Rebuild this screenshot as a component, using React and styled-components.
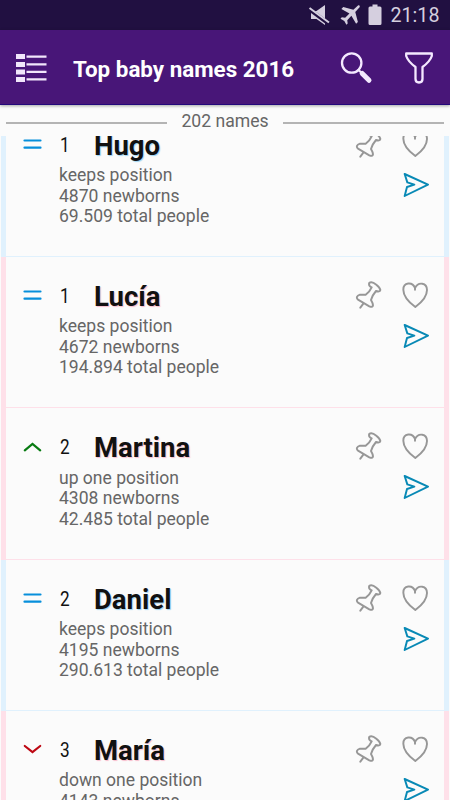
import React from "react";
import styled, { createGlobalStyle } from "styled-components";

const names = [
  {
    name: "Hugo",
    rank: 1,
    trend: "same",
    gender: "boy",
    lines: ["keeps position", "4870 newborns", "69.509 total people"],
  },
  {
    name: "Lucía",
    rank: 1,
    trend: "same",
    gender: "girl",
    lines: ["keeps position", "4672 newborns", "194.894 total people"],
  },
  {
    name: "Martina",
    rank: 2,
    trend: "up",
    gender: "girl",
    lines: ["up one position", "4308 newborns", "42.485 total people"],
  },
  {
    name: "Daniel",
    rank: 2,
    trend: "same",
    gender: "boy",
    lines: ["keeps position", "4195 newborns", "290.613 total people"],
  },
  {
    name: "María",
    rank: 3,
    trend: "down",
    gender: "girl",
    lines: ["down one position", "4143 newborns"],
  },
];

const trends = {
  same: { color: "#078fdb", d: "M1.5 5.5H17.5M1.5 12.7H17.5" },
  up: { color: "#087b12", d: "M1.8 12.4 9.5 6 17.2 12.4" },
  down: { color: "#bd0712", d: "M1.8 6 9.5 12 17.2 6" },
};

const TrendIcon = ({ trend }) => (
  <TrendSvg viewBox="0 0 18 18" $color={trends[trend].color}>
    <path d={trends[trend].d} />
  </TrendSvg>
);

const PinIcon = () => (
  <ActionSvg viewBox="45 93 84 84" $color="#979797">
    <path d="M94 97Q87 97 87 102Q87 109 95 112Q90 124 77 134H60Q45 139 54 149L88 169Q98 173 99 166Q99 160 93 150Q96 137 108 123Q119 127 121 120Q120 113 109 104Q100 97 94 97ZM70 161 61 173" />
  </ActionSvg>
);

const HeartIcon = () => (
  <ActionSvg viewBox="183 93 84 84" $color="#979797">
    <path d="M226 171C210 159 190 141 190 119C190 97 217 94 225 114C235 94 261 98 261 120C261 142 241 160 226 171Z" />
    <path d="M225 112V119" />
  </ActionSvg>
);

const SendIcon = () => (
  <ActionSvg viewBox="183 216 84 84" $color="#0889b5">
    <path d="M194 225 264 257 194 291 201 264 223 257 202 250Z" />
  </ActionSvg>
);

const NameRow = ({ item }) => (
  <Row $gender={item.gender}>
    <TrendIcon trend={item.trend} />
    <Details>
      <Heading>
        <Rank>{item.rank}</Rank>
        <Name $gender={item.gender}>{item.name}</Name>
      </Heading>
      {item.lines.map((line) => (
        <Line key={line}>{line}</Line>
      ))}
    </Details>
    <Actions>
      <PinIcon />
      <HeartIcon />
      <SendCell>
        <SendIcon />
      </SendCell>
    </Actions>
  </Row>
);

const App = () => {
  return (
    <>
      <GlobalStyle />
      <Screen>
        <StatusBar>
          <StatusSvg viewBox="0 0 22 22" $width={22}>
            <path d="M3 7h5.5L17 1v20L8.500 15H3z" fill="#d5cfdf" />
            <path d="M1 5 21 20" stroke="#211041" strokeWidth="4" />
            <path d="M1.500 4 21 18.500" stroke="#d5cfdf" strokeWidth="2" />
          </StatusSvg>
          <StatusSvg viewBox="0.5 0 19 19" $width={20}>
            <path
              d="M17.6.4C18.8 0 19.7 1 19.1 2.200L15 6.600l2.500 9.600-1.700 1.700-4.500-7.800-3.900 4.300.4 3.200-1.200 1.200-2-3.700L1 13l1.200-1.300 3.200.4 4.100-4-7.700-4.300 1.800-1.900 9.600 2.600z"
              fill="#d5cfdf"
            />
          </StatusSvg>
          <StatusSvg viewBox="0 0 14 22" $width={14}>
            <path
              d="M4.500 .5h5v2h2.500q1.500 0 1.500 1.500v15.500Q13.500 21 12 21H2Q.5 21 .5 19.500V4Q.5 2.500 2 2.500h2.500z"
              fill="#d5cfdf"
            />
          </StatusSvg>
          <Clock>21:18</Clock>
        </StatusBar>
        <AppBar>
          <MenuSvg viewBox="0 0 32 30">
            <path d="M0 0h9v5H0zM0 8h9v5H0zM0 15.500h9v5H0zM0 23h9v5H0z" />
            <path d="M10.500 1.400h20v2.400h-20zM10.500 9.200h20v2.400h-20zM10.500 16.700h20v2.400h-20zM10.500 24.200h20v2.400h-20z" />
          </MenuSvg>
          <Title>Top baby names 2016</Title>
          <ToolSvg viewBox="-0.7 0.5 34 34">
            <circle cx="12" cy="11.500" r="9.700" />
            <path d="M18.800 18.500 22 21.500" />
            <path d="M22.500 22 29.300 28.800" strokeWidth="5" />
          </ToolSvg>
          <ToolSvg viewBox="0 0.5 34 34">
            <path d="M4.200 2H29.800V4.500Q28 10 20.500 15.500V27.500Q20.500 31 17 31T13.500 27.500V15.500Q6 10 4.200 4.500Z" />
          </ToolSvg>
        </AppBar>
        <Count>
          <Rule />
          <span>202 names</span>
          <Rule />
        </Count>
        <List>
          {names.map((item) => (
            <NameRow key={item.name} item={item} />
          ))}
        </List>
      </Screen>
    </>
  );
};

export default App;

const tint = ({ $gender }) => ($gender === "boy" ? "#e0f1fd" : "#fee0e9");

const GlobalStyle = createGlobalStyle`
  * {
    box-sizing: border-box;
  }
  body {
    margin: 0;
    background: #fbfbfb;
    overflow: hidden;
  }
`;

const Screen = styled.main`
  display: flex;
  flex-direction: column;
  width: 450px;
  height: 800px;
  overflow: hidden;
  background: #fbfbfb;
  font-family: Roboto, sans-serif;
`;

const StatusBar = styled.div`
  display: flex;
  flex: none;
  align-items: center;
  justify-content: flex-end;
  height: 30px;
  padding-right: 10.5px;
  background: #211041;
`;

const StatusSvg = styled.svg`
  flex: none;
  width: ${({ $width }) => $width}px;
  height: ${({ $width }) => ($width === 20 ? 20 : 22)}px;
  margin-right: ${({ $width }) => ($width === 22 ? 10 : 8)}px;
`;

const Clock = styled.span`
  padding-top: 1px;
  color: #d5cfdf;
  font-size: 19.7px;
  line-height: 30px;
`;

const AppBar = styled.header`
  display: flex;
  flex: none;
  align-items: center;
  height: 75px;
  padding: 3px 14px 0 16px;
  background: #481678;
  border-bottom: 1px solid #23087b;
  box-shadow: 0 1px 3px rgba(0, 0, 0, 0.35);
`;

const MenuSvg = styled.svg`
  width: 32px;
  height: 30px;
  margin-right: 25px;
  fill: #f1e6fb;
`;

const Title = styled.h1`
  flex: 1;
  margin: 0;
  color: #fff;
  font-size: 22.4px;
  font-weight: 700;
  line-height: 30px;
  white-space: nowrap;
`;

const ToolSvg = styled.svg`
  width: 34px;
  height: 34px;
  margin-left: 29px;
  fill: none;
  stroke: #f4e9ff;
  stroke-width: 2.3;
  stroke-linecap: round;
  stroke-linejoin: round;
`;

const Count = styled.div`
  display: flex;
  flex: none;
  align-items: center;
  gap: 14px;
  height: 31px;
  padding: 1px 6px 0;
  color: #666;
  font-size: 17.6px;
  line-height: 31px;
`;

const Rule = styled.i`
  flex: 1;
  height: 2px;
  margin-top: 3px;
  background: #b4b4b4;
`;

const List = styled.div`
  flex: 1;
  overflow: hidden;

  & > :first-child {
    margin-top: -30.4px;
  }
`;

const Row = styled.article`
  display: flex;
  height: 151.3px;
  margin: 0 1px;
  padding: 22px 15px 0 17px;
  background: linear-gradient(${tint}, ${tint}) bottom / 100% 1px no-repeat;
  border: solid ${tint};
  border-width: 0 5px;
`;

const TrendSvg = styled.svg`
  flex: none;
  width: 18px;
  height: 18px;
  margin: 7.5px 18px 0 0;
  overflow: visible;
  fill: none;
  stroke: ${({ $color }) => $color};
  stroke-width: 2.2;
  stroke-linecap: round;
`;

const Details = styled.div`
  flex: 1;
`;

const Heading = styled.div`
  display: flex;
  height: 37.5px;
  line-height: 36px;
`;

const Rank = styled.span`
  width: 34px;
  margin-left: 1px;
  color: #111;
  font-size: 21px;
  line-height: 34px;
  transform: scaleX(0.82);
  transform-origin: left;
`;

const Name = styled.span`
  color: #111;
  font-size: 27.5px;
  font-weight: 700;
  text-shadow: 1px 1px 1px
    ${({ $gender }) => ($gender === "boy" ? "#9bd3f2" : "#f8bccc")};
`;

const Line = styled.div`
  height: 20.5px;
  color: #666;
  font-size: 17.55px;
  line-height: 20.5px;
  white-space: nowrap;
`;

const Actions = styled.div`
  display: grid;
  grid-template-columns: 28px 28px;
  grid-template-rows: 28px 28px;
  gap: 13px 18px;
  padding-top: 2px;
`;

const ActionSvg = styled.svg`
  display: block;
  width: 28px;
  height: 28px;
  fill: none;
  stroke: ${({ $color }) => $color};
  stroke-width: 5.8;
  stroke-linecap: round;
  stroke-linejoin: round;
`;

const SendCell = styled.div`
  grid-column: 2;
`;
